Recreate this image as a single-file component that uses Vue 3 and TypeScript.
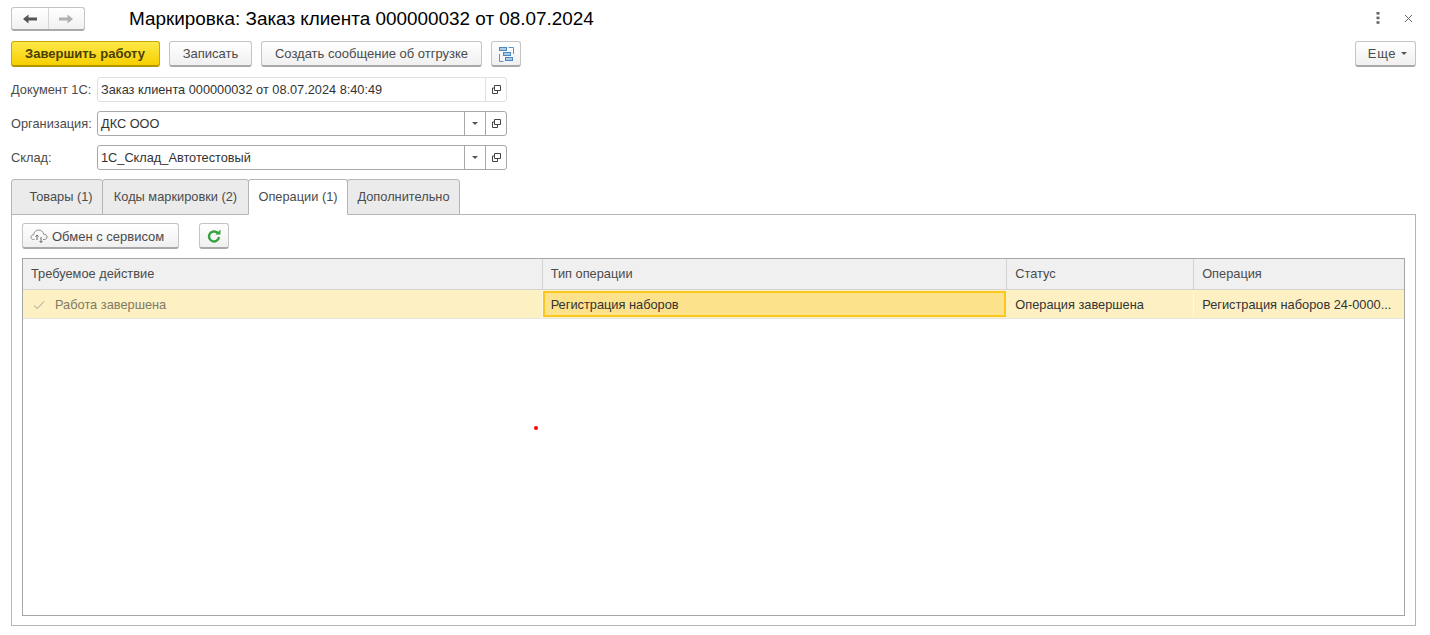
<script setup lang="ts">
const tabs = [
  { label: 'Товары (1)', width: 92, active: false, pad: true },
  { label: 'Коды маркировки (2)', width: 147, active: false, pad: false },
  { label: 'Операции (1)', width: 100, active: true, pad: false },
  { label: 'Дополнительно', width: 113, active: false, pad: false },
]
const fields = [
  { label: 'Документ 1С:', value: 'Заказ клиента 000000032 от 08.07.2024 8:40:49', readonly: true },
  { label: 'Организация:', value: 'ДКС ООО', readonly: false },
  { label: 'Склад:', value: '1С_Склад_Автотестовый', readonly: false },
]
</script>

<template>
  <div class="page">
    <header class="titlebar">
      <div class="nav">
        <span class="nav-cell">
          <svg width="16" height="12" viewBox="0 0 16 12"><path d="M1 6 L6.5 1.5 V4.6 H15 V7.4 H6.5 V10.5 Z" fill="#555" /></svg>
        </span>
        <span class="nav-cell nav-cell-right">
          <svg width="16" height="12" viewBox="0 0 16 12"><path d="M15 6 L9.5 1.5 V4.6 H1 V7.4 H9.5 V10.5 Z" fill="#b0b0b0" /></svg>
        </span>
      </div>
      <h1 class="title">Маркировка: Заказ клиента 000000032 от 08.07.2024</h1>
      <div class="window-tools">
        <svg width="4" height="12" viewBox="0 0 4 12"><rect x="0.5" y="0" width="3" height="2.6" fill="#666" /><rect x="0.5" y="4.6" width="3" height="2.6" fill="#666" /><rect x="0.5" y="9.2" width="3" height="2.6" fill="#666" /></svg>
        <svg width="9" height="9" viewBox="0 0 9 9"><path d="M1 1 L8 8 M8 1 L1 8" stroke="#666" stroke-width="1" fill="none" /></svg>
      </div>
    </header>

    <div class="commandbar">
      <button class="btn btn-primary">Завершить работу</button>
      <button class="btn btn-save">Записать</button>
      <button class="btn btn-ship">Создать сообщение об отгрузке</button>
      <button class="btn btn-icon btn-structure">
        <svg width="16" height="17" viewBox="0 0 16 17">
          <path d="M1.5 9 V16.5 H5.5 M10.5 2.5 H15.5 V9" fill="none" stroke="#5a93c4" />
          <rect x="1.5" y="2.5" width="7" height="3" fill="#a9cbe8" stroke="#4c88bd" />
          <rect x="5.5" y="7.5" width="7" height="3" fill="#a9cbe8" stroke="#4c88bd" />
          <rect x="7.5" y="12.5" width="7" height="3" fill="#a9cbe8" stroke="#4c88bd" />
        </svg>
      </button>
      <button class="btn btn-more"><span class="more-text">Еще</span><i class="caret"></i></button>
    </div>

    <div class="form">
      <div v-for="f in fields" :key="f.label" class="field">
        <label class="field-label">{{ f.label }}</label>
        <div class="input" :class="{ 'input-readonly': f.readonly }">
          <span class="input-text">{{ f.value }}</span>
          <span v-if="!f.readonly" class="input-btn"><i class="caret"></i></span>
          <span class="input-btn">
            <svg width="9" height="9" viewBox="0 0 9 9"><path d="M2.5 0.5 H8.5 V5.5 H2.5 Z M2.5 3 H0.5 V8.5 H5.5 V5.5" fill="none" stroke="#444" /></svg>
          </span>
        </div>
      </div>
    </div>

    <div class="tabs">
      <div
        v-for="t in tabs"
        :key="t.label"
        class="tab"
        :class="{ 'tab-active': t.active, 'tab-first': t.pad }"
        :style="{ width: t.width + 'px' }"
      >{{ t.label }}</div>
    </div>

    <section class="panel">
      <div class="panel-tools">
        <button class="btn btn-exchange">
          <svg width="18" height="15" viewBox="0 0 18 15">
            <path d="M4.5 10.5 H3.5 C1.5 10.5 0.8 9 1 7.8 C1.2 6.4 2.4 5.7 3.6 5.8 C3.9 3 6 1 8.6 1 C11.2 1 13.2 2.8 13.6 5.2 C15.5 5 17 6.3 17 8 C17 9.6 15.8 10.5 14.2 10.5 H13" fill="none" stroke="#8a8a8a" />
            <path d="M7 6 V11 M5.5 7.5 L7 6 L8.5 7.5 M11 8 V13.5 M9.5 12 L11 13.5 L12.5 12" fill="none" stroke="#666" />
          </svg>
          <span>Обмен с сервисом</span>
        </button>
        <button class="btn btn-icon btn-refresh">
          <svg width="14" height="14" viewBox="0 0 14 14">
            <path d="M11.4 5 A5 5 0 1 0 12 8" fill="none" stroke="#35a33b" stroke-width="2.4" />
            <path d="M8.4 5.6 H13.5 V0.5 Z" fill="#35a33b" />
          </svg>
        </button>
      </div>

      <div class="grid">
        <div class="grid-head">
          <div class="cell col-1">Требуемое действие</div>
          <div class="cell col-2">Тип операции</div>
          <div class="cell col-3">Статус</div>
          <div class="cell col-4">Операция</div>
        </div>
        <div class="grid-row">
          <div class="cell col-1 cell-done">
            <svg width="12" height="10" viewBox="0 0 12 10"><path d="M1 5.5 L4.2 8.5 L11 1.5" fill="none" stroke="#9c9c90" /></svg>
            <span>Работа завершена</span>
          </div>
          <div class="cell cell-current">Регистрация наборов</div>
          <div class="cell col-3">Операция завершена</div>
          <div class="cell col-4"><span class="ellipsis">Регистрация наборов 24-0000...</span></div>
        </div>
        <i class="dot"></i>
      </div>
    </section>
  </div>
</template>

<style>
html, body { margin: 0; background: #fff; }
</style>

<style scoped>
.page {
  width: 1430px;
  height: 635px;
  box-sizing: border-box;
  padding: 7px 14px 9px 11px;
  display: flex;
  flex-direction: column;
  font: 13px/16px "Liberation Sans", Arial, sans-serif;
  color: #4b4b4b;
  overflow: hidden;
}
.titlebar { display: flex; align-items: center; height: 24px; flex: none; }
.nav {
  width: 74px; height: 24px; box-sizing: border-box;
  display: flex;
  border: 1px solid #c4c4c4; border-bottom: 2px solid #aaa; border-radius: 3px;
  background: linear-gradient(#fff, #f1f1f1);
}
.nav-cell { flex: 1; display: flex; align-items: center; justify-content: center; }
.nav-cell-right { border-left: 1px solid #d6d6d6; }
.title {
  margin: 0 0 0 44px;
  font-size: 18.9px; font-weight: 400; line-height: 24px;
  color: #000;
}
.window-tools {
  margin-left: auto; margin-right: 3px; margin-top: -2px;
  display: flex; align-items: center; gap: 24px;
}
.commandbar { display: flex; margin-top: 10px; height: 26px; flex: none; gap: 9px; }
.btn {
  height: 26px; box-sizing: border-box; padding: 0;
  font: inherit; color: #4b4b4b;
  display: inline-flex; align-items: center; justify-content: center;
  border: 1px solid #c4c4c4; border-bottom: 2px solid #a9a9a9; border-radius: 3px;
  background: linear-gradient(#fff, #f0f0f0);
}
.btn-primary {
  width: 149px; font-weight: 700; color: #4a4000; padding-right: 1px;
  border-color: #c9a800; border-bottom-color: #b39600;
  background: linear-gradient(#ffe84a, #f6d000);
}
.btn-save { width: 83px; }
.btn-ship { width: 221px; }
.btn-icon { width: 30px; }
.btn-more { width: 61px; margin-left: auto; gap: 5px; padding-left: 4px; }
.more-text { letter-spacing: 0.6px; }
.caret {
  display: inline-block; width: 0; height: 0;
  border-left: 3px solid transparent; border-right: 3px solid transparent; border-top: 3px solid #555;
}
.form { display: flex; flex-direction: column; gap: 9px; margin-top: 10px; width: 496px; flex: none; }
.field { display: flex; align-items: center; height: 25px; }
.field-label { width: 86px; flex: none; white-space: nowrap; font-size: 12.8px; }
.input {
  flex: 1; height: 25px; box-sizing: border-box;
  display: flex; align-items: stretch;
  border: 1px solid #a8a8a8; border-radius: 3px; background: #fff;
}
.input-readonly { border-color: #e0e0e0; }
.input-text { flex: 1; padding-left: 3px; line-height: 23px; font-size: 12.75px; color: #333; white-space: nowrap; overflow: hidden; }
.input-btn {
  width: 20px; flex: none; border-left: 1px solid #a8a8a8;
  display: flex; align-items: center; justify-content: center;
}
.input-readonly .input-btn { border-left-color: #e0e0e0; }
.tabs { display: flex; margin-top: 9px; height: 36px; flex: none; position: relative; z-index: 1; }
.tab {
  box-sizing: border-box; height: 36px; font-size: 12.8px;
  display: flex; align-items: center; justify-content: center;
  margin-right: -1px;
  border: 1px solid #b5b5b5; border-radius: 3px 3px 0 0;
  background: #ebebeb; color: #4b4b4b;
}
.tab-first { padding-left: 8px; }
.tab-active { background: #fff; border-bottom-color: #fff; position: relative; z-index: 1; }
.panel {
  flex: 1; min-height: 0; margin-top: -1px;
  box-sizing: border-box;
  display: flex; flex-direction: column;
  padding: 8px 10px 9px 10px;
  border: 1px solid #b5b5b5; background: #fff;
}
.panel-tools { display: flex; gap: 20px; flex: none; height: 26px; }
.btn-exchange { width: 157px; justify-content: flex-start; padding-left: 7px; gap: 4px; padding-top: 2px; }
.grid {
  flex: 1; min-height: 0; margin-top: 9px; position: relative;
  border: 1px solid #a5a5a5; background: #fff;
  box-sizing: border-box; font-size: 12.8px;
}
.grid-head, .grid-row { display: flex; box-sizing: border-box; }
.grid-head { height: 31px; background: #f0f0f0; border-bottom: 1px solid #d3d3d3; }
.grid-row { height: 29px; background: #fdf1c4; border-bottom: 1px solid #e6e6e6; color: #333; }
.cell {
  box-sizing: border-box; display: flex; align-items: center;
  padding-left: 8px; border-right: 1px solid #d3d3d3; white-space: nowrap; overflow: hidden;
}
.grid-row .cell { border-right-color: #fff8df; padding-top: 1px; }
.col-1 { width: 520px; }
.col-2 { width: 465px; }
.col-3 { width: 187px; }
.col-4 { width: 210px; border-right: 0; }
.cell-done { color: #7f7a63; padding-left: 10px; gap: 10px; }
.grid-row .cell-current {
  width: 464px; margin: 1px 1px 0 0; height: 26px;
  background: #fde28c; color: #333;
  padding: 1px 0 0 6px;
  border: 2px solid #f8c81e;
}
.ellipsis { white-space: nowrap; }
.dot {
  position: absolute; left: 511px; top: 167px;
  width: 4px; height: 4px; border-radius: 50%; background: #f00;
}
</style>
